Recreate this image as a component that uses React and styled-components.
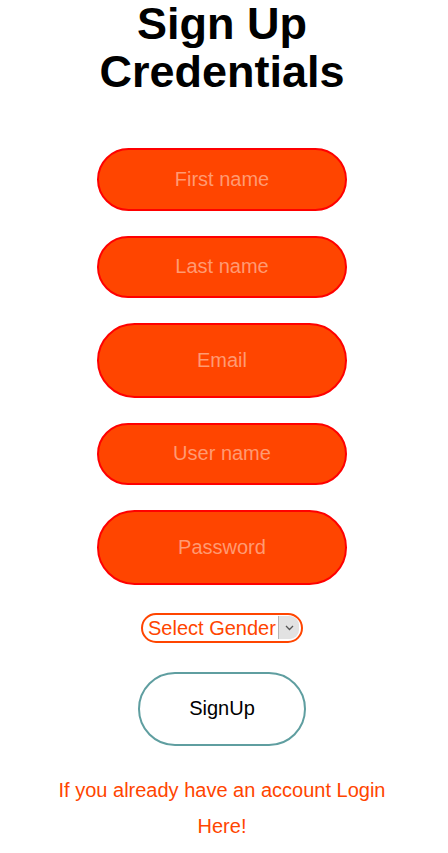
import React from "react";
import styled, { createGlobalStyle } from "styled-components";

const GlobalStyle = createGlobalStyle`
  body {
    margin: 0;
    background: #fff;
    font-family: "Liberation Sans", Arial, sans-serif;
  }
`;

const fields = [
  { name: "firstName", placeholder: "First name", type: "text", tall: false },
  { name: "lastName", placeholder: "Last name", type: "text", tall: false },
  { name: "email", placeholder: "Email", type: "email", tall: true },
  { name: "userName", placeholder: "User name", type: "text", tall: false },
  { name: "password", placeholder: "Password", type: "password", tall: true },
];

const App = () => {
  return (
    <>
      <GlobalStyle />
      <Page>
        <Title>
          Sign Up
          <br />
          Credentials
        </Title>
        <Form onSubmit={(e) => e.preventDefault()}>
          {fields.map((f) => (
            <Input
              key={f.name}
              name={f.name}
              type={f.type}
              placeholder={f.placeholder}
              $tall={f.tall}
            />
          ))}
          <SelectWrap>
            <Select name="gender" defaultValue="">
              <option value="" disabled>
                Select Gender
              </option>
              <option value="male">Male</option>
              <option value="female">Female</option>
            </Select>
            <Arrow>
              <svg width="9" height="6" viewBox="0 0 9 6">
                <path d="M1 1l3.5 3.5L8 1" fill="none" stroke="#555" strokeWidth="1.3" />
              </svg>
            </Arrow>
          </SelectWrap>
          <SignUpButton type="submit">SignUp</SignUpButton>
          <LoginText>If you already have an account Login Here!</LoginText>
        </Form>
      </Page>
    </>
  );
};

const Page = styled.div`
  display: flex;
  flex-direction: column;
  align-items: center;
  padding-right: 4px;
`;

const Title = styled.h1`
  margin: 0;
  font-size: 45px;
  line-height: 48px;
  font-weight: bold;
  text-align: center;
  color: #000;
`;

const Form = styled.form`
  display: flex;
  flex-direction: column;
  align-items: center;
  margin-top: 52px;
`;

const Input = styled.input`
  box-sizing: border-box;
  width: 250px;
  height: ${(p) => (p.$tall ? "74.4px" : "62.6px")};
  margin-bottom: 25px;
  border: 2px solid #ff0000;
  border-radius: 40px;
  background: #ff4500;
  color: #fff;
  font-family: "Liberation Sans", Arial, sans-serif;
  font-size: 20px;
  text-align: center;
  outline: none;
  &::placeholder {
    color: #ff9a72;
  }
`;

const SelectWrap = styled.div`
  display: flex;
  align-items: center;
  box-sizing: border-box;
  width: 162px;
  height: 30px;
  margin-top: 3px;
  padding: 0 2px 0 5px;
  border: 2px solid #ff4500;
  border-radius: 15px;
  background: #fff;
`;

const Select = styled.select`
  appearance: none;
  flex: 1;
  min-width: 0;
  border: none;
  background: transparent;
  color: #ff4500;
  font-family: "Liberation Sans", Arial, sans-serif;
  font-size: 20px;
  padding: 0;
  outline: none;
`;

const Arrow = styled.span`
  display: flex;
  align-items: center;
  justify-content: center;
  width: 20px;
  height: 23px;
  background: #e2e2e2;
  border-left: 1px solid #b5b5b5;
  border-radius: 0 9px 9px 0;
`;

const SignUpButton = styled.button`
  box-sizing: border-box;
  width: 168px;
  height: 74px;
  margin-top: 29px;
  border: 2px solid #5f9ea0;
  border-radius: 40px;
  background: #fff;
  color: #000;
  font-family: "Liberation Sans", Arial, sans-serif;
  font-size: 20px;
  cursor: pointer;
`;

const LoginText = styled.p`
  width: 340px;
  margin: 26px 0 0;
  color: #ff4500;
  font-size: 20px;
  line-height: 36px;
  text-align: center;
`;

export default App;
